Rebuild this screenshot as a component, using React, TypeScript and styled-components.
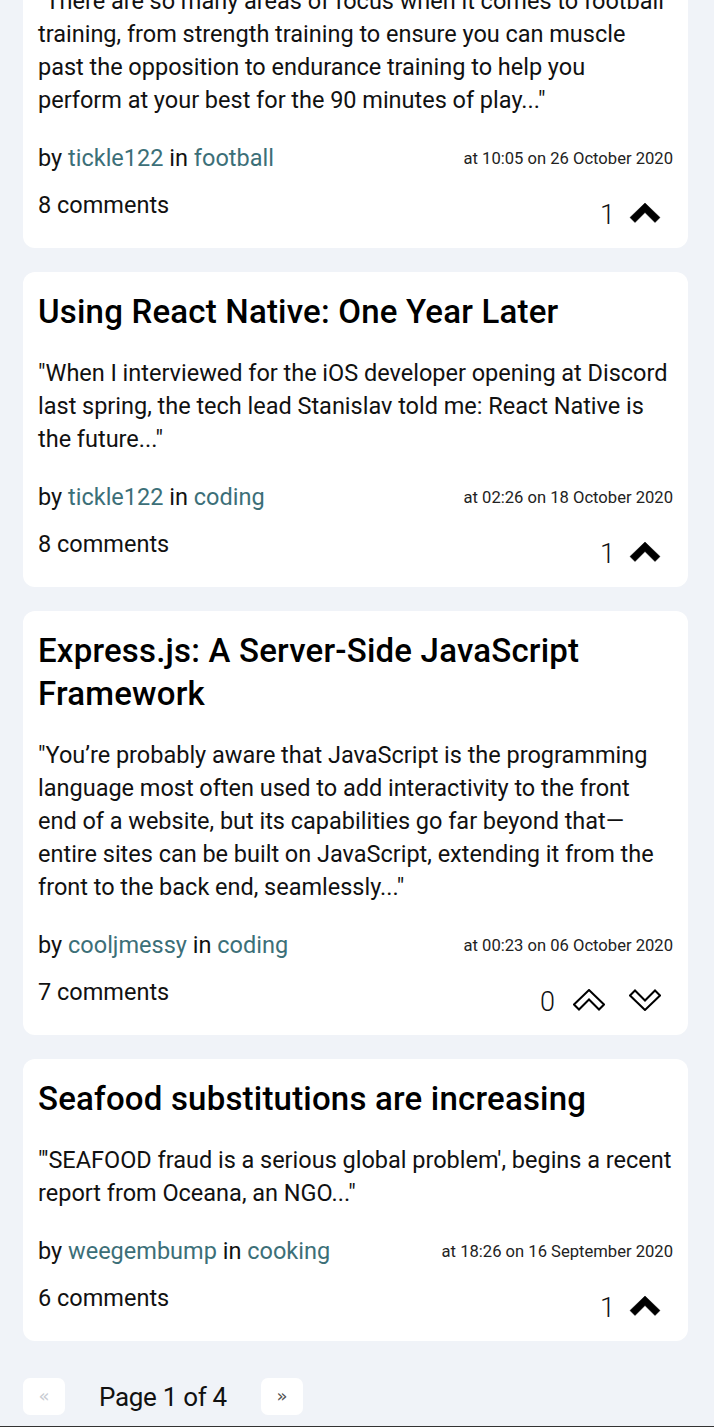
import React from "react";
import styled, { createGlobalStyle } from "styled-components";

const Global = createGlobalStyle`
  html, body { margin: 0; padding: 0; background: #f0f3f8; }
  body { font-family: Roboto, "Liberation Sans", sans-serif; color: #111; }
`;

const Page = styled.main`
  padding: 0 26px 0 23px;
  margin-top: -100px;
`;

const Feed = styled.div`
  display: flex;
  flex-direction: column;
  gap: 24px;
`;

const Card = styled.article`
  background: #fff;
  border-radius: 12px;
  padding: 18px 15px 12px 15px;
`;

const Title = styled.h2`
  margin: 0;
  font-size: 33px;
  font-weight: 500;
  line-height: 43px;
  letter-spacing: 0.2px;
  color: #000;
`;

const Body = styled.p`
  margin: 24px 0 0;
  font-size: 23.5px;
  line-height: 33px;
  letter-spacing: 0;
  word-spacing: -0.1px;
  color: #111;
`;

const Meta = styled.div`
  margin-top: 25px;
  display: flex;
  justify-content: space-between;
  align-items: center;
  font-size: 23.5px;
  line-height: 33px;
`;

const Link = styled.a`
  color: #3c6f78;
  text-decoration: none;
`;

const DateText = styled.span`
  font-size: 16.6px;
  color: #222;
`;

const Footer = styled.div`
  margin-top: 14px;
  display: flex;
  justify-content: space-between;
  align-items: flex-start;
`;

const Comments = styled.span`
  font-size: 23.5px;
  line-height: 33px;
`;

const VoteBox = styled.div`
  height: 47px;
  display: flex;
  align-items: center;
  gap: 12px;
  padding-right: 6px;
`;

const Count = styled.span<{ $tight?: boolean }>`
  font-size: 27px;
  font-weight: 300;
  padding-top: 4px;
  margin-right: ${(p) => (p.$tight ? "-4px" : "0")};
`;

const VoteButton = styled.button`
  width: 44px;
  height: 40px;
  border: 0;
  background: transparent;
  padding: 0;
  display: flex;
  align-items: center;
  justify-content: center;
  cursor: pointer;
`;

const Pager = styled.nav`
  margin-top: 37px;
  display: flex;
  align-items: center;
  gap: 34px;
  padding-bottom: 11px;
`;

const PageButton = styled.button<{ $disabled?: boolean }>`
  width: 42px;
  height: 37px;
  border: 0;
  border-radius: 7px;
  background: #fff;
  font-family: "DejaVu Sans", sans-serif;
  font-size: 18px;
  color: ${(p) => (p.$disabled ? "#c8ccd2" : "#555")};
  display: flex;
  align-items: center;
  justify-content: center;
  padding: 0 0 2px;
`;

const PageLabel = styled.span`
  font-size: 26px;
  letter-spacing: -0.3px;
  color: #111;
`;

const BottomBar = styled.div`
  height: 40px;
  background: #333;
  margin: 0 -26px 0 -23px;
`;

const Chevron = ({ dir, solid }: { dir: "up" | "down"; solid: boolean }) => (
  <svg
    width="32"
    height="22"
    viewBox="0 0 32 22"
    style={{ transform: dir === "down" ? "rotate(180deg)" : undefined }}
  >
    <polygon
      points="16,1 31,15.5 26,20.5 16,10.5 6,20.5 1,15.5"
      fill={solid ? "#000" : "#fff"}
      stroke="#000"
      strokeWidth={solid ? 0.5 : 2}
      strokeLinejoin="miter"
    />
  </svg>
);

type Article = {
  title: string;
  body: string;
  author: string;
  topic: string;
  date: string;
  comments: number;
  votes: number;
  voted: boolean;
};

const articles: Article[] = [
  {
    title: "Football training",
    body: "\"There are so many areas of focus when it comes to football training, from strength training to ensure you can muscle past the opposition to endurance training to help you perform at your best for the 90 minutes of play...\"",
    author: "tickle122",
    topic: "football",
    date: "at 10:05 on 26 October 2020",
    comments: 8,
    votes: 1,
    voted: true,
  },
  {
    title: "Using React Native: One Year Later",
    body: "\"When I interviewed for the iOS developer opening at Discord last spring, the tech lead Stanislav told me: React Native is the future...\"",
    author: "tickle122",
    topic: "coding",
    date: "at 02:26 on 18 October 2020",
    comments: 8,
    votes: 1,
    voted: true,
  },
  {
    title: "Express.js: A Server-Side JavaScript Framework",
    body: "\"You’re probably aware that JavaScript is the programming language most often used to add interactivity to the front end of a website, but its capabilities go far beyond that—entire sites can be built on JavaScript, extending it from the front to the back end, seamlessly...\"",
    author: "cooljmessy",
    topic: "coding",
    date: "at 00:23 on 06 October 2020",
    comments: 7,
    votes: 0,
    voted: false,
  },
  {
    title: "Seafood substitutions are increasing",
    body: "\"'SEAFOOD fraud is a serious global problem', begins a recent report from Oceana, an NGO...\"",
    author: "weegembump",
    topic: "cooking",
    date: "at 18:26 on 16 September 2020",
    comments: 6,
    votes: 1,
    voted: true,
  },
];

const ArticleCard = ({ a }: { a: Article }) => (
  <Card>
    <Title>{a.title}</Title>
    <Body>{a.body}</Body>
    <Meta>
      <span>
        by <Link href="#">{a.author}</Link> in <Link href="#">{a.topic}</Link>
      </span>
      <DateText>{a.date}</DateText>
    </Meta>
    <Footer>
      <Comments>{a.comments} comments</Comments>
      <VoteBox>
        <Count $tight={a.votes === 1}>{a.votes}</Count>
        {a.voted ? (
          <VoteButton aria-label="upvoted">
            <Chevron dir="up" solid />
          </VoteButton>
        ) : (
          <>
            <VoteButton aria-label="upvote">
              <Chevron dir="up" solid={false} />
            </VoteButton>
            <VoteButton aria-label="downvote">
              <Chevron dir="down" solid={false} />
            </VoteButton>
          </>
        )}
      </VoteBox>
    </Footer>
  </Card>
);

export default function App() {
  return (
    <>
      <Global />
      <Page>
        <Feed>
          {articles.map((a) => (
            <ArticleCard key={a.title} a={a} />
          ))}
        </Feed>
        <Pager>
          <PageButton $disabled>«</PageButton>
          <PageLabel>Page 1 of 4</PageLabel>
          <PageButton>»</PageButton>
        </Pager>
        <BottomBar />
      </Page>
    </>
  );
}
